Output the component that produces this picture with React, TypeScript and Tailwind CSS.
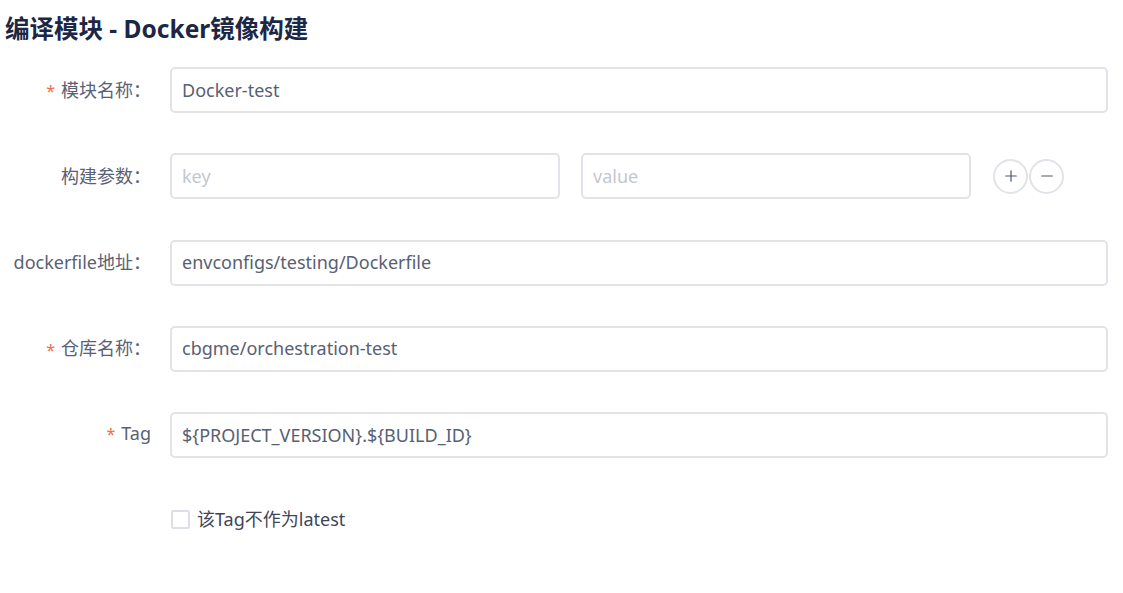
import { Plus, Minus } from 'lucide-react';

const font = { fontFamily: '"Noto Sans", "Noto Sans CJK SC", sans-serif' };

function Label({ text, required, colon = true }: { text: string; required?: boolean; colon?: boolean }) {
  return (
    <div className="w-[170px] shrink-0 flex items-center justify-end pr-[19px] text-[18px] text-[#5a6176]">
      {required && <span className="text-[#f26b4b] text-[16px] mr-[6px] mt-[2px]">*</span>}
      <span>{text}</span>
      {colon && <span className="w-[18px]">：</span>}
      {!colon && <span className="w-[0px]" />}
    </div>
  );
}

function Field({ value, placeholder, className }: { value?: string; placeholder?: string; className?: string }) {
  return (
    <div
      className={
        'h-[46px] border-2 border-[#e1e3e8] rounded-[5px] px-[10px] flex items-center text-[18px] ' +
        (className ?? 'w-[938px]')
      }
    >
      {value ? (
        <span className="text-[#586074]">{value}</span>
      ) : (
        <span className="text-[#c3c7cf]">{placeholder}</span>
      )}
    </div>
  );
}

export default function App() {
  return (
    <div className="w-[1123px] h-[593px] bg-white" style={font}>
      <div className="h-[67px] pt-[12px] pl-[5px]">
        <h1 className="text-[24.5px] leading-[34px] font-bold text-[#1c2745]">编译模块 - Docker镜像构建</h1>
      </div>
      <div className="flex flex-col gap-[40.25px]">
        <div className="flex items-center h-[46px]">
          <Label text="模块名称" required />
          <Field value="Docker-test" />
        </div>
        <div className="flex items-center h-[46px]">
          <Label text="构建参数" />
          <Field placeholder="key" className="w-[390px]" />
          <Field placeholder="value" className="w-[390px] ml-[21px]" />
          <div className="flex items-center ml-[22px]">
            <button className="w-[35px] h-[35px] rounded-full border-2 border-[#e1e3e8] flex items-center justify-center text-[#4f576b]">
              <Plus className="w-[18px] h-[18px]" strokeWidth={1.6} />
            </button>
            <button className="w-[35px] h-[35px] rounded-full border-2 border-[#e1e3e8] flex items-center justify-center text-[#4f576b] ml-[1px]">
              <Minus className="w-[18px] h-[18px]" strokeWidth={1.6} />
            </button>
          </div>
        </div>
        <div className="flex items-center h-[46px]">
          <Label text="dockerfile地址" />
          <Field value="envconfigs/testing/Dockerfile" />
        </div>
        <div className="flex items-center h-[46px]">
          <Label text="仓库名称" required />
          <Field value="cbgme/orchestration-test" />
        </div>
        <div className="flex items-center h-[46px]">
          <div className="w-[170px] shrink-0 flex items-center justify-end pr-[19px] text-[18px] text-[#5a6176] -mt-[4px]">
            <span className="text-[#f26b4b] text-[16px] mr-[6px] mt-[2px]">*</span>
            <span>Tag</span>
          </div>
          <Field value="${PROJECT_VERSION}.${BUILD_ID}" />
        </div>
      </div>
      <div className="flex items-center mt-[48px] pl-[171px]">
        <span className="w-[19px] h-[19px] border-2 border-[#dcdfe5] rounded-[2px]" />
        <span className="ml-[7px] text-[18px] text-[#3f4658]">该Tag不作为latest</span>
      </div>
    </div>
  );
}
